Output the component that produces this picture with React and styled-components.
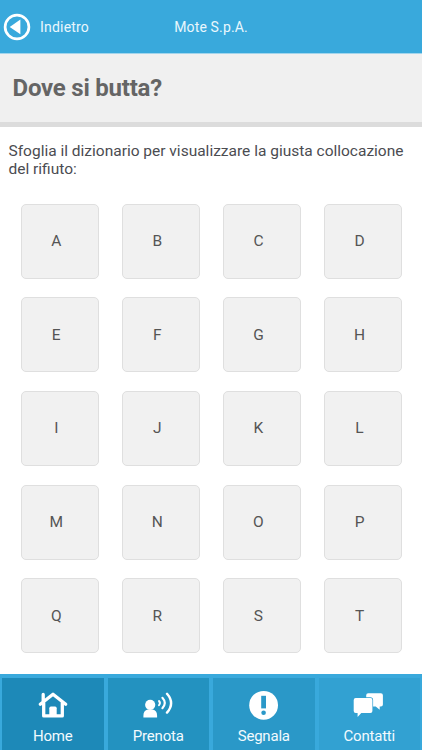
import React from "react";
import styled, { createGlobalStyle } from "styled-components";

const GlobalStyle = createGlobalStyle`
  * {
    box-sizing: border-box;
  }

  body {
    margin: 0;
    background: #fff;
    color: #4b4c51;
    font-family: Roboto, "Liberation Sans", sans-serif;
  }

  button {
    border: 0;
    padding: 0;
    background: none;
    font-family: inherit;
  }
`;

const Screen = styled.div`
  height: 750px;
  display: flex;
  flex-direction: column;
  overflow: hidden;
`;

const Header = styled.header`
  height: 54px;
  flex-shrink: 0;
  display: grid;
  grid-template-columns: 1fr auto 1fr;
  align-items: center;
  background: #39a9dc;
  border-bottom: 1px solid #a3d5ec;
  color: #e9f7fd;
  font-size: 14px;
  letter-spacing: 0.15px;
`;

const BackButton = styled.button`
  display: flex;
  align-items: center;
  gap: 9px;
  padding-left: 3px;
  color: inherit;
  font-size: 14px;
  letter-spacing: 0.2px;
`;

const TitleBar = styled.div`
  height: 73px;
  flex-shrink: 0;
  padding: 19px 12.5px 0;
  background: #f0f0f0;
  border-bottom: 5px solid #dcdcdc;

  h1 {
    margin: 0;
    color: #656565;
    font-size: 24px;
    line-height: 30px;
    font-weight: 700;
    letter-spacing: -0.22px;
  }
`;

const Intro = styled.p`
  margin: 15px 8.5px 0;
  flex-shrink: 0;
  font-size: 15.5px;
  line-height: 18px;
`;

const LetterGrid = styled.div`
  flex: 1;
  display: grid;
  grid-template-columns: repeat(4, 77.5px);
  grid-auto-rows: 75px;
  gap: 18.7px 23.6px;
  padding: 25.6px 0 0 21px;
`;

const Letter = styled.button`
  padding-right: 7px;
  border: 1px solid #dfdfdf;
  border-radius: 5px;
  background: #f1f1f1;
  color: #555;
  font-size: 15.5px;
`;

const TabBar = styled.nav`
  height: 76px;
  flex-shrink: 0;
  display: grid;
  grid-template-columns: repeat(4, 1fr);
  gap: 4px;
  padding: 4px 2px 0;
  background: #39a9dc;
`;

const Tab = styled.button`
  display: flex;
  flex-direction: column;
  align-items: center;
  padding-top: 11px;
  background: ${(props) => props.$color};
  color: #f2fafe;
  font-size: 15px;
  line-height: 18px;
  letter-spacing: -0.2px;

  svg {
    display: block;
    margin-bottom: 6px;
  }
`;

const BackIcon = () => (
  <svg width="28" height="28" viewBox="0 0 28 28">
    <circle cx="14" cy="14" r="11.9" fill="none" stroke="#fff" strokeWidth="2.7" />
    <path d="M17.4 6.6v14.6L6.7 13.9z" fill="#fff" />
  </svg>
);

const HomeIcon = () => (
  <svg width="32" height="32" viewBox="0 0 32 32">
    <path
      d="M3.3 15.3 16 5.2l12.7 10.1M6.2 14V5.4M6.7 14v12.9h18.6V14"
      fill="none"
      stroke="#fff"
      strokeWidth="3.3"
      strokeLinecap="round"
      strokeLinejoin="round"
    />
    <path d="M12.3 26.5v-7.3q0-1.6 1.6-1.6h4.2q1.6 0 1.6 1.6v7.3z" fill="#fff" />
  </svg>
);

const CallIcon = () => (
  <svg width="32" height="32" viewBox="0 0 32 32">
    <circle cx="8.2" cy="15.8" r="5.1" fill="#fff" />
    <path d="M1.4 28.6v-1.8q0-5.8 4.4-6.4h4.9q4.4.6 4.4 6.4v1.8z" fill="#fff" />
    <g fill="none" stroke="#fff" strokeLinecap="round">
      <path d="M17 12q1.9 2.1 0 4.2" strokeWidth="1.9" />
      <path d="M20.4 8.8q4.8 5.2 0 10.4" strokeWidth="2.1" />
      <path d="M25 4.8q8.2 9.3 0 18.8" strokeWidth="2.4" />
    </g>
  </svg>
);

const AlertIcon = () => (
  <svg width="32" height="32" viewBox="0 0 32 32">
    <circle cx="15.6" cy="16.3" r="14.4" fill="#fff" />
    <path d="M13.2 6.8H18v12.6h-4.8z" fill="#2a98c8" />
    <circle cx="15.6" cy="23.8" r="2.3" fill="#2a98c8" />
  </svg>
);

const ChatIcon = () => (
  <svg width="32" height="32" viewBox="0 0 32 32">
    <path
      d="M15.2 4.2h12.7q2 0 2 2v9.2q0 2-2 2h-1.2v3.4l-4-3.4h-7.5q-2 0-2-2V6.2q0-2 2-2z"
      fill="#fff"
    />
    <path
      d="M2.7 8.9h14.7q2 0 2 2v11q0 2-2 2H8.3L4.6 28v-4.1H2.7q-2 0-2-2v-11q0-2 2-2z"
      fill="#fff"
      stroke="#32a1d2"
      strokeWidth="1.4"
      paintOrder="stroke"
    />
  </svg>
);

const letters = "ABCDEFGHIJKLMNOPQRST".split("");

const tabs = [
  { label: "Home", color: "#1d89b8", Icon: HomeIcon },
  { label: "Prenota", color: "#2392c0", Icon: CallIcon },
  { label: "Segnala", color: "#2a98c8", Icon: AlertIcon },
  { label: "Contatti", color: "#32a1d2", Icon: ChatIcon },
];

const App = () => {
  return (
    <Screen>
      <GlobalStyle />
      <Header>
        <BackButton>
          <BackIcon />
          <span>Indietro</span>
        </BackButton>
        <span>Mote S.p.A.</span>
      </Header>
      <TitleBar>
        <h1>Dove si butta?</h1>
      </TitleBar>
      <Intro>
        Sfoglia il dizionario per visualizzare la giusta collocazione del
        rifiuto:
      </Intro>
      <LetterGrid>
        {letters.map((letter) => (
          <Letter key={letter}>{letter}</Letter>
        ))}
      </LetterGrid>
      <TabBar>
        {tabs.map(({ label, color, Icon }) => (
          <Tab key={label} $color={color}>
            <Icon />
            <span>{label}</span>
          </Tab>
        ))}
      </TabBar>
    </Screen>
  );
};

export default App;
